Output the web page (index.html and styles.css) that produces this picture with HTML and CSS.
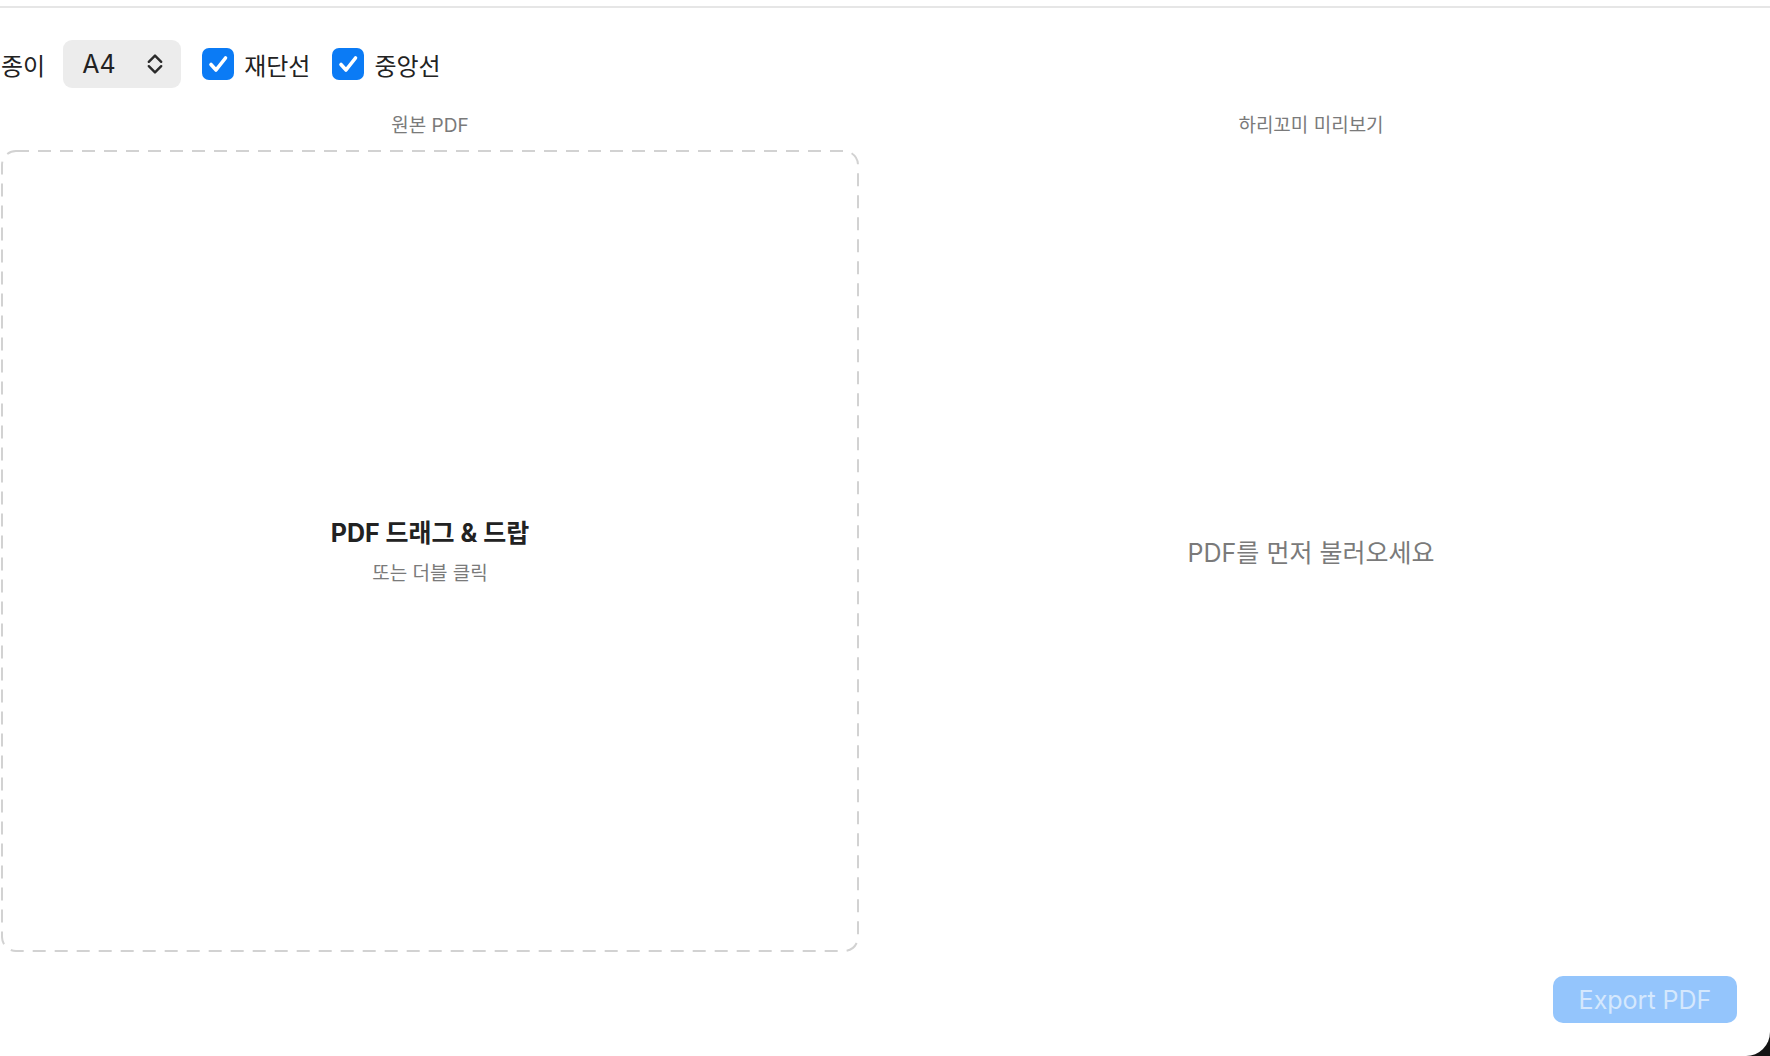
FILE: index.html
```html
<!DOCTYPE html>
<html lang="ko">
<head>
<meta charset="utf-8">
<title>하리꼬미</title>
<link rel="stylesheet" href="styles.css">
</head>
<body>
<div class="window">
  <div class="topline"></div>
  <div class="toolbar">
    <span class="label">종이</span>
    <div class="select">
      <span class="select-value">A4</span>
      <svg class="chevrons" width="16" height="22" viewBox="0 0 16 22" aria-hidden="true">
        <path d="M1.8 8.8 L8 2.6 L14.2 8.8" />
        <path d="M1.8 13.2 L8 19.4 L14.2 13.2" />
      </svg>
    </div>
    <label class="check">
      <span class="box">
        <svg width="32" height="32" viewBox="0 0 32 32" aria-hidden="true"><path d="M9 16.5 L14 22 L23.5 10" /></svg>
      </span>
      <span class="check-text">재단선</span>
    </label>
    <label class="check">
      <span class="box">
        <svg width="32" height="32" viewBox="0 0 32 32" aria-hidden="true"><path d="M9 16.5 L14 22 L23.5 10" /></svg>
      </span>
      <span class="check-text">중앙선</span>
    </label>
  </div>
  <div class="main">
    <section class="col">
      <div class="col-title">원본 PDF</div>
      <div class="dropzone">
        <svg class="dash" aria-hidden="true"><rect class="dash-rect" rx="14" ry="14" /></svg>
        <div class="drop-title">PDF 드래그 &amp; 드랍</div>
        <div class="drop-sub">또는 더블 클릭</div>
      </div>
    </section>
    <section class="col">
      <div class="col-title">하리꼬미 미리보기</div>
      <div class="preview">
        <div class="preview-empty">PDF를 먼저 불러오세요</div>
      </div>
    </section>
  </div>
  <div class="footer">
    <button class="export" disabled>Export PDF</button>
  </div>
</div>
</body>
</html>
```

FILE: styles.css
```css
html, body {
  margin: 0;
  padding: 0;
  background: #141414;
}
body {
  font-family: Inter, "Noto Sans CJK KR", sans-serif;
  color: #222;
}
.window {
  width: 1770px;
  height: 1056px;
  background: #ffffff;
  border-bottom-right-radius: 24px;
  overflow: hidden;
  display: flex;
  flex-direction: column;
}
.topline {
  height: 6px;
  border-bottom: 2px solid #e6e6e6;
  flex: none;
}
.toolbar {
  margin-top: 32px;
  height: 48px;
  display: flex;
  align-items: center;
  padding-left: 1px;
  flex: none;
}
.label {
  font-size: 24px;
  color: #222;
  margin-right: 18px;
}
.select {
  width: 118px;
  height: 48px;
  box-sizing: border-box;
  background: #ececec;
  border-radius: 9px;
  display: flex;
  align-items: center;
  justify-content: space-between;
  padding: 0 18px 0 19px;
  margin-right: 21px;
}
.select-value {
  font-size: 25px;
  color: #222;
}
.chevrons path {
  fill: none;
  stroke: #2a2a2a;
  stroke-width: 2.4;
  stroke-linecap: round;
  stroke-linejoin: round;
}
.check {
  display: flex;
  align-items: center;
  margin-right: 22px;
}
.box {
  width: 32px;
  height: 32px;
  border-radius: 7px;
  background: #0b7bf5;
  display: flex;
  margin-right: 10px;
}
.box path {
  fill: none;
  stroke: #ffffff;
  stroke-width: 3.6;
  stroke-linecap: round;
  stroke-linejoin: round;
}
.check-text {
  font-size: 24px;
  color: #222;
}
.main {
  margin-top: 24px;
  display: grid;
  grid-template-columns: 858px 858px;
  column-gap: 23px;
  padding-left: 1px;
  flex: none;
}
.col {
  display: flex;
  flex-direction: column;
}
.col-title {
  height: 28px;
  line-height: 28px;
  text-align: center;
  font-size: 19px;
  color: #7a7a7a;
  margin-bottom: 10px;
}
.dropzone {
  position: relative;
  height: 802px;
  display: flex;
  flex-direction: column;
  align-items: center;
  justify-content: center;
}
.dash {
  position: absolute;
  left: 0;
  top: 0;
  width: 100%;
  height: 100%;
  overflow: visible;
}
.dash-rect {
  x: 1px;
  y: 1px;
  width: calc(100% - 2px);
  height: calc(100% - 2px);
  fill: none;
  stroke: #d2d2d2;
  stroke-width: 2;
  stroke-dasharray: 13 9;
}
.drop-title {
  font-size: 25px;
  font-weight: 700;
  color: #222;
  line-height: 32px;
}
.drop-sub {
  font-size: 19px;
  color: #7a7a7a;
  line-height: 24px;
  margin-top: 13px;
}
.preview {
  height: 802px;
  display: flex;
  align-items: center;
  justify-content: center;
}
.preview-empty {
  font-size: 25px;
  color: #7a7a7a;
}
.footer {
  margin-top: 24px;
  display: flex;
  justify-content: flex-end;
  padding-right: 33px;
  flex: none;
}
.export {
  width: 184px;
  height: 47px;
  border: none;
  border-radius: 10px;
  background: #94c5fc;
  color: #d5e8fd;
  font-family: Inter, "Noto Sans CJK KR", sans-serif;
  font-size: 25px;
  padding: 0;
}
```
